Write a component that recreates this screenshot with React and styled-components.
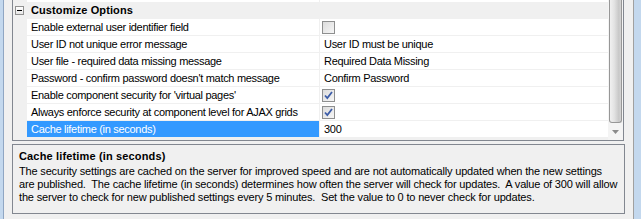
import React from "react";
import styled, { createGlobalStyle } from "styled-components";

const GlobalStyle = createGlobalStyle`
  * { box-sizing: border-box; }
  body {
    margin: 0;
    background: #f0f0f0;
    font-family: "Liberation Sans", Arial, sans-serif;
    font-size: 11px;
    color: #000;
  }
`;

const rows = [
  { label: "Enable external user identifier field", check: false },
  { label: "User ID not unique error message", value: "User ID must be unique" },
  { label: "User file - required data missing message", value: "Required Data Missing" },
  { label: "Password - confirm password doesn't match message", value: "Confirm Password" },
  { label: "Enable component security for 'virtual pages'", check: true },
  { label: "Always enforce security at component level for AJAX grids", check: true },
  { label: "Cache lifetime (in seconds)", value: "300", selected: true },
];

const helpLines = [
  "The security settings are cached on the server for improved speed and are not automatically updated when the new settings",
  "are published.  The cache lifetime (in seconds) determines how often the server will check for updates.  A value of 300 will allow",
  "the server to check for new published settings every 5 minutes.  Set the value to 0 to never check for updates.",
];

const CheckBox = ({ checked }) => (
  <Box>
    {checked && (
      <svg width="11" height="11" viewBox="0 0 11 11">
        <path d="M2 5.5 L4.3 8 L9 2" fill="none" stroke="#3d5da8" strokeWidth="1.8" />
      </svg>
    )}
  </Box>
);

const App = () => {
  return (
    <>
      <GlobalStyle />
      <Frame>
        <WindowEdge $side="left" />
        <Main>
          <Grid>
            <Rows>
              <PartialRow>
                <Gutter />
                <Label />
                <Value />
              </PartialRow>
              <CategoryRow>
                <Gutter>
                  <Toggle>
                    <svg width="7" height="7" viewBox="0 0 7 7">
                      <path d="M1 3.5 H6" stroke="#000" strokeWidth="1" />
                    </svg>
                  </Toggle>
                </Gutter>
                <CategoryLabel>Customize Options</CategoryLabel>
              </CategoryRow>
              {rows.map((r) => (
                <Row key={r.label}>
                  <Gutter />
                  <Label $selected={r.selected}>{r.label}</Label>
                  <Value>
                    {r.check !== undefined ? <CheckBox checked={r.check} /> : r.value}
                  </Value>
                </Row>
              ))}
            </Rows>
            <ScrollBar>
              <Thumb />
              <ArrowButton>
                <svg width="7" height="4" viewBox="0 0 7 4">
                  <path d="M0 0 H7 L3.5 4 Z" fill="#8a8a8a" />
                </svg>
              </ArrowButton>
            </ScrollBar>
          </Grid>
          <Help>
            <HelpTitle>Cache lifetime (in seconds)</HelpTitle>
            {helpLines.map((l) => (
              <HelpLine key={l}>{l}</HelpLine>
            ))}
          </Help>
        </Main>
        <WindowEdge $side="right" />
      </Frame>
    </>
  );
};

const Frame = styled.div`
  display: flex;
  width: 641px;
  height: 219px;
  overflow: hidden;
  background: #f0f0f0;
`;

const WindowEdge = styled.div`
  flex: none;
  width: ${(p) => (p.$side === "left" ? 4 : 8)}px;
  background: #c3d8ee;
  border-${(p) => (p.$side === "left" ? "right" : "left")}: 1px solid
    ${(p) => (p.$side === "left" ? "#8fa6c3" : "#a0a0a0")};
`;

const Main = styled.div`
  flex: 1;
  display: flex;
  flex-direction: column;
  gap: 3px;
  padding: 0 9px 0 8px;
`;

const Grid = styled.div`
  flex: none;
  height: 141px;
  display: flex;
  border: 1px solid #828790;
  border-top: none;
  background: #f0f0f0;
`;

const Rows = styled.div`
  flex: 1;
  display: flex;
  flex-direction: column;
  letter-spacing: -0.3px;
`;

const Row = styled.div`
  flex: none;
  display: flex;
  height: 17px;
  border-bottom: 1px solid #f0f0f0;
  line-height: 16px;
  white-space: nowrap;
`;

const PartialRow = styled(Row)`
  height: 3px;
`;

const CategoryRow = styled(Row)`
  height: 16px;
  line-height: 15px;
  background: #f0f0f0;
`;

const Gutter = styled.div`
  flex: none;
  width: 14px;
  background: #f0f0f0;
  display: flex;
  align-items: center;
  justify-content: flex-end;
`;

const Toggle = styled.div`
  width: 9px;
  height: 9px;
  margin-right: 3px;
  border: 1px solid #919191;
  background: linear-gradient(#ffffff, #e6e6e6);
  display: flex;
  align-items: center;
  justify-content: center;
`;

const CategoryLabel = styled.div`
  flex: 1;
  padding-left: 4px;
  font-weight: bold;
  letter-spacing: 0.1px;
`;

const Label = styled.div`
  flex: none;
  width: 292px;
  padding-left: 4px;
  overflow: hidden;
  background: ${(p) => (p.$selected ? "#3399ff" : "#fff")};
  color: ${(p) => (p.$selected ? "#fff" : "#000")};
`;

const Value = styled.div`
  flex: 1;
  display: flex;
  align-items: center;
  padding-left: 4px;
  background: #fff;
  border-left: 1px solid #f0f0f0;
`;

const Box = styled.div`
  width: 13px;
  height: 13px;
  margin-left: -2px;
  border: 1px solid #8e8f8f;
  background: linear-gradient(135deg, #dcdcdc, #f6f6f6);
  display: flex;
  align-items: center;
  justify-content: center;
`;

const ScrollBar = styled.div`
  flex: none;
  width: 15px;
  display: flex;
  flex-direction: column;
  background: #f4f4f4;
`;

const Thumb = styled.div`
  flex: 1;
  margin: 0 1px;
  border: 1px solid #979797;
  border-top: none;
  border-radius: 0 0 3px 3px;
  background: linear-gradient(90deg, #f1f1f1, #e2e2e2 40%, #c8c8c8 80%, #d4d4d4);
`;

const ArrowButton = styled.div`
  flex: none;
  height: 17px;
  display: flex;
  align-items: center;
  justify-content: center;
`;

const Help = styled.div`
  flex: none;
  height: 70px;
  margin-right: -1px;
  border: 1px solid #828790;
  padding: 5px 6px 0;
  line-height: 13px;
  white-space: pre;
  letter-spacing: -0.17px;
`;

const HelpTitle = styled.div`
  font-weight: bold;
  font-size: 11px;
  letter-spacing: 0.15px;
  margin-bottom: 2px;
`;

const HelpLine = styled.div``;

export default App;
